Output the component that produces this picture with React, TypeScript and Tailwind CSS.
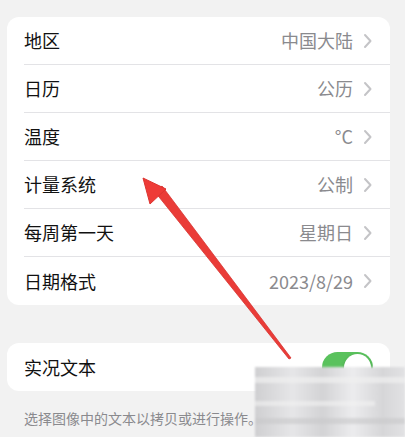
const rows: [string, string][] = [
  ["地区", "中国大陆"],
  ["日历", "公历"],
  ["温度", "°C"],
  ["计量系统", "公制"],
  ["每周第一天", "星期日"],
  ["日期格式", "2023/8/29"],
];

function Chevron() {
  return (
    <svg width="10" height="16" viewBox="0 0 10 16" className="ml-[10px] shrink-0">
      <path d="M2 2 L7.5 8 L2 14" fill="none" stroke="#c4c4c7" strokeWidth="2" strokeLinecap="round" strokeLinejoin="round" />
    </svg>
  );
}

export default function App() {
  return (
    <div
      className="relative h-[437px] w-[405px] overflow-hidden bg-[#f2f2f2]"
      style={{ fontFamily: '"Noto Sans CJK SC", "Noto Sans", sans-serif' }}
    >
      <div className="pl-[7px] pr-[15px] pt-[17px]">
        {/* Settings list */}
        <div className="rounded-[12px] bg-white">
          {rows.map(([label, value], i) => (
            <div key={label} className="pl-[17px]">
              <div
                className={
                  "flex h-[48px] items-center pr-[17px] " +
                  (i < rows.length - 1 ? "border-b border-[#e3e3e6]" : "")
                }
              >
                <span className="flex-1 text-[18px] text-[#111]">{label}</span>
                <span className="text-[18px] text-[#8a8a8e]">{value}</span>
                <Chevron />
              </div>
            </div>
          ))}
        </div>

        {/* Live text */}
        <div className="mt-[38px] flex h-[48px] items-center rounded-[12px] bg-white pl-[17px] pr-[17px]">
          <span className="flex-1 text-[18px] text-[#111]">实况文本</span>
          <div className="flex h-[31px] w-[51px] items-center justify-end rounded-full bg-[#5ac25d] p-[2px]">
            <div className="h-[27px] w-[27px] rounded-full bg-white shadow-[0_2px_4px_rgba(0,0,0,0.2)]" />
          </div>
        </div>
        <p className="mt-[17px] pl-[17px] text-[14px] text-[#8a8a8e]">选择图像中的文本以拷贝或进行操作。</p>
      </div>

      {/* Red arrow annotation */}
      <svg className="pointer-events-none absolute left-0 top-0" width="405" height="437" viewBox="0 0 405 437">
        <polygon points="155,192 162,186 291,358 289,359" fill="#ea3c38" stroke="#d7322e" strokeWidth="0.8" strokeLinejoin="round" />
        <polygon points="143,178 166,189 150,204" fill="#ee3b37" stroke="#dc3430" strokeWidth="1" strokeLinejoin="round" />
      </svg>

      {/* Blurred watermark patch */}
      <div className="absolute left-[255px] top-[367px] h-[70px] w-[150px] bg-[linear-gradient(90deg,#cfcfd1_0%,#e6e6e8_25%,#d3d3d5_45%,#ececee_65%,#d6d6d8_85%,#e2e2e4_100%)] blur-[1px]">
        <div className="mt-[10px] h-[6px] w-full bg-[#efefef]/70" />
        <div className="mt-[18px] h-[5px] w-[80%] bg-[#f2f2f2]/60" />
        <div className="mt-[12px] h-[6px] w-full bg-[#c8c8ca]/60" />
      </div>
    </div>
  );
}
